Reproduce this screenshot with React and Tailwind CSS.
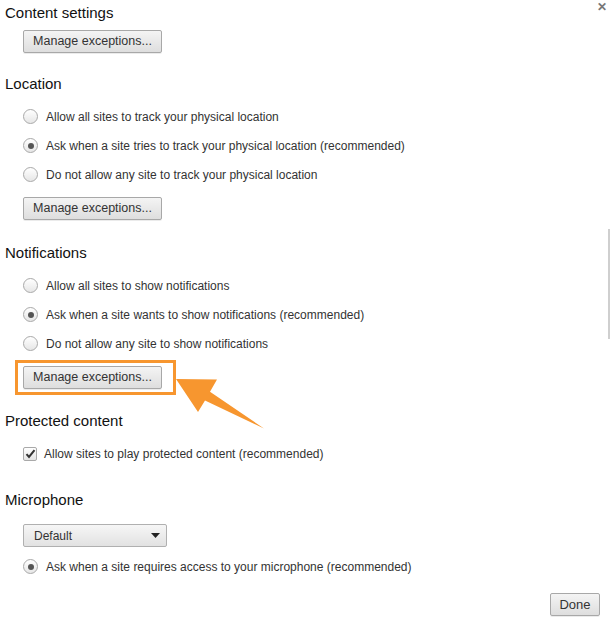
const font = { fontFamily: '"Liberation Sans", Arial, sans-serif' }

function Btn({ children, className = '' }) {
  return (
    <button
      className={`block h-[23px] rounded-[2px] border border-[#a8a8a8] bg-gradient-to-b from-[#f4f4f4] to-[#dedede] text-[12.5px] text-[#333] shadow-[0_1px_0_rgba(0,0,0,0.08)] ${className}`}
    >
      {children}
    </button>
  )
}

function Radio({ checked, children }) {
  return (
    <div className="h-[29px] flex items-center pl-[23px]">
      <span className="w-[15px] h-[15px] rounded-full border border-[#a9a9a9] bg-gradient-to-b from-white to-[#e6e6e6] flex items-center justify-center">
        {checked && <span className="w-[6px] h-[6px] rounded-full bg-[#555]" />}
      </span>
      <span className="ml-[8px] text-[12px] text-[#333]">{children}</span>
    </div>
  )
}

function Heading({ children, className = '' }) {
  return <div className={`h-[20px] leading-[20px] px-[5px] text-[15px] text-[#111] ${className}`}>{children}</div>
}

export default function App() {
  return (
    <div style={font} className="relative w-[610px] h-[624px] bg-white overflow-hidden">
      <div className="h-[26px] leading-[26px] px-[5px] text-[15px] text-[#111]">Content settings</div>
      <div className="absolute right-[3px] top-[1px] text-[12px] font-bold text-[#777] leading-none">✕</div>

      <div className="mt-[4px] pl-[23px]">
        <Btn className="w-[139px]">Manage exceptions...</Btn>
      </div>

      <Heading className="mt-[21px]">Location</Heading>
      <div className="mt-[8px]">
        <Radio>Allow all sites to track your physical location</Radio>
        <Radio checked>Ask when a site tries to track your physical location (recommended)</Radio>
        <Radio>Do not allow any site to track your physical location</Radio>
      </div>
      <div className="mt-[8px] pl-[23px]">
        <Btn className="w-[139px]">Manage exceptions...</Btn>
      </div>

      <Heading className="mt-[23px]">Notifications</Heading>
      <div className="mt-[8px]">
        <Radio>Allow all sites to show notifications</Radio>
        <Radio checked>Ask when a site wants to show notifications (recommended)</Radio>
        <Radio>Do not allow any site to show notifications</Radio>
      </div>
      <div className="mt-[8px] pl-[23px]">
        <div className="relative w-[139px]">
          <Btn className="w-[139px]">Manage exceptions...</Btn>
          <div className="absolute left-[-8px] top-[-6px] w-[161px] h-[35px] border-[3px] border-[#f7962f]" />
        </div>
      </div>

      <Heading className="mt-[22px]">Protected content</Heading>
      <div className="mt-[8px] h-[29px] flex items-center pl-[23px]">
        <span className="w-[14px] h-[14px] rounded-[2px] border border-[#a9a9a9] bg-gradient-to-b from-white to-[#e4e4e4] flex items-center justify-center">
          <svg width="11" height="10" viewBox="0 0 11 10">
            <path d="M1.5 5.2 L4 8 L9.5 1.2" fill="none" stroke="#333" strokeWidth="2" />
          </svg>
        </span>
        <span className="ml-[7px] text-[12px] text-[#333]">Allow sites to play protected content (recommended)</span>
      </div>

      <Heading className="mt-[22px]">Microphone</Heading>
      <div className="mt-[14px] pl-[23px]">
        <div className="w-[144px] h-[23px] rounded-[2px] border border-[#b0b0b0] bg-gradient-to-b from-[#f6f6f6] to-[#e2e2e2] flex items-center justify-between pl-[10px] pr-[6px] text-[12px] text-[#333]">
          <span>Default</span>
          <svg width="9" height="5" viewBox="0 0 9 5"><path d="M0 0 H9 L4.5 5 Z" fill="#222" /></svg>
        </div>
      </div>
      <div className="mt-[5px]">
        <Radio checked>Ask when a site requires access to your microphone (recommended)</Radio>
      </div>

      <div className="mt-[12px] flex justify-end pr-[10px]">
        <Btn className="w-[50px] text-[13px]">Done</Btn>
      </div>

      <div className="absolute left-[608px] top-[229px] w-[2px] h-[110px] bg-[#cfcfcf]" />

      <svg className="absolute left-0 top-0 pointer-events-none" width="610" height="624">
        <polygon
          points="176,379 217,379.5 210,391.7 264,428.5 205,400.4 198,412"
          fill="#f7962f"
        />
      </svg>
    </div>
  )
}
